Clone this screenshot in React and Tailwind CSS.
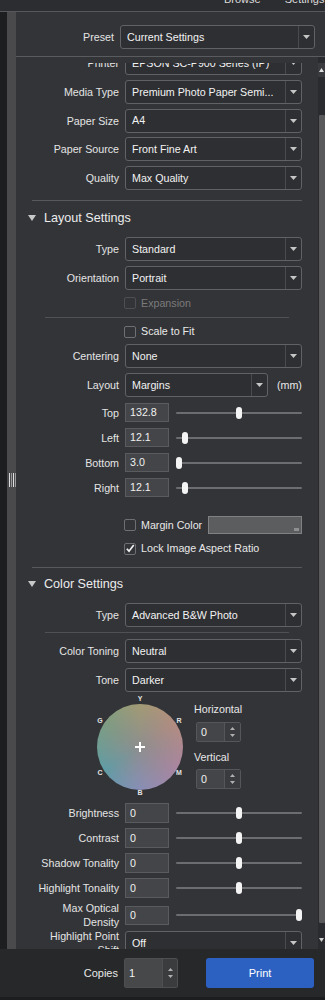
import React from 'react';

function Arrow() {
  return (
    <svg width="7" height="4" viewBox="0 0 7 4">
      <path d="M0 0H7L3.5 4Z" fill="#c6c6c6" />
    </svg>
  );
}

function UpDown() {
  return (
    <div className="flex flex-col items-center gap-[4px]">
      <svg width="5" height="3" viewBox="0 0 5 3"><path d="M0 3H5L2.5 0Z" fill="#b0b0b0" /></svg>
      <svg width="5" height="3" viewBox="0 0 5 3"><path d="M0 0H5L2.5 3Z" fill="#b0b0b0" /></svg>
    </div>
  );
}

function Select({ value, className = 'w-[177px]' }) {
  return (
    <div className={`${className} h-[24px] flex border border-[#616265] rounded-[3px] bg-[#2e2f32]`}>
      <div className="flex-1 min-w-0 pl-[6px] flex items-center text-[#f2f2f2] whitespace-nowrap overflow-hidden">
        {value}
      </div>
      <div className="w-[16px] border-l border-[#4a4b4e] flex items-center justify-center">
        <Arrow />
      </div>
    </div>
  );
}

function Label({ children }) {
  return <div className="w-[103px] shrink-0 text-right text-[#e4e4e4] leading-[14px]">{children}</div>;
}

function SelectRow({ label, value, className = '' }) {
  return (
    <div className={`flex items-center h-[24px] ${className}`}>
      <Label>{label}</Label>
      <div className="ml-[6px]">
        <Select value={value} />
      </div>
    </div>
  );
}

function Checkbox({ checked, disabled }) {
  return (
    <div
      className={`w-[12px] h-[12px] rounded-[2px] border flex items-center justify-center ${
        disabled ? 'border-[#4e4f52]' : 'border-[#6e6f72]'
      }`}
    >
      {checked && (
        <svg width="11" height="11" viewBox="0 0 11 11">
          <path d="M2 5.8L4.4 8.4L9.6 1.6" stroke="#f4f4f4" strokeWidth="1.8" fill="none" />
        </svg>
      )}
    </div>
  );
}

function CheckRow({ label, checked, disabled, className = '' }) {
  return (
    <div className={`flex items-center h-[16px] pl-[108px] ${className}`}>
      <Checkbox checked={checked} disabled={disabled} />
      <span className={`ml-[5px] ${disabled ? 'text-[#7b7b7b]' : 'text-[#e8e8e8]'}`}>{label}</span>
    </div>
  );
}

function SliderRow({ label, value, pos, className = '', h = 'h-[19px]' }) {
  return (
    <div className={`flex items-center ${className}`}>
      <Label>{label}</Label>
      <div className={`ml-[6px] w-[44px] ${h} bg-[#444548] border border-[#5a5b5e] pl-[4px] flex items-center text-[#f0f0f0]`}>
        {value}
      </div>
      <div className="ml-[7px] w-[126px] relative h-[19px] flex items-center">
        <div className="h-[2px] w-full bg-[#6c6d70] rounded-full" />
        <div
          className="absolute top-[3.5px] w-[6px] h-[12px] rounded-full bg-[#f4f4f4]"
          style={{ left: pos - 3 }}
        />
      </div>
    </div>
  );
}

function SectionHeader({ title, className = '' }) {
  return (
    <div className={`flex items-center h-[24px] ${className}`}>
      <svg className="ml-[12px]" width="8" height="6" viewBox="0 0 8 6">
        <path d="M0 0H8L4 6Z" fill="#c8c8c8" />
      </svg>
      <span className="ml-[8px] text-[12.6px] text-[#ececec]">{title}</span>
    </div>
  );
}

function Spin({ value }) {
  return (
    <div className="flex w-[45px] h-[20px] border border-[#55565a] rounded-[2px]">
      <div className="w-[27px] bg-[#444548] pl-[4px] flex items-center text-[#f0f0f0]">{value}</div>
      <div className="flex-1 bg-[#3a3b3e] border-l border-[#55565a] flex items-center justify-center">
        <UpDown />
      </div>
    </div>
  );
}

function ColorWheel() {
  const mark = 'absolute -translate-x-1/2 -translate-y-1/2 text-[7px] font-bold text-[#e4e4e4] leading-none';
  return (
    <div className="relative w-[100px] h-[104px] ml-[74px] shrink-0">
      <div className="absolute left-[7px] top-[12px] w-[86px] h-[86px] rounded-full bg-[conic-gradient(#a49c72_0deg,#b78c7e_55deg,#ac84a2_120deg,#888eba_180deg,#5a9ea8_237deg,#7c9e80_305deg,#a49c72_360deg)]">
        <div className="absolute inset-0 rounded-full bg-[radial-gradient(circle,rgba(142,142,142,1)_0%,rgba(142,142,142,0.5)_38%,rgba(142,142,142,0)_78%)]" />
        <div className="absolute left-[38px] top-[42px] w-[10px] h-[2px] bg-white" />
        <div className="absolute left-[42px] top-[38px] w-[2px] h-[10px] bg-white" />
      </div>
      <span className={`${mark} left-[50px] top-[6px]`}>Y</span>
      <span className={`${mark} left-[10px] top-[28px]`}>G</span>
      <span className={`${mark} left-[89px] top-[28px]`}>R</span>
      <span className={`${mark} left-[10px] top-[80px]`}>C</span>
      <span className={`${mark} left-[89px] top-[80px]`}>M</span>
      <span className={`${mark} left-[50px] top-[100px]`}>B</span>
    </div>
  );
}

export default function App() {
  return (
    <div className="w-[325px] h-[1000px] flex flex-col overflow-hidden bg-[#333438] font-['Liberation_Sans',Arial,sans-serif] text-[10.7px]">
      {/* top bar */}
      <div className="h-[12px] shrink-0 bg-[#2c2d30] border-b border-[#57585b] overflow-hidden">
        <div className="flex -mt-[8px] leading-[14px] text-[11px] text-[#dcdcdc]">
          <span className="ml-[224px]">Browse</span>
          <span className="ml-[24px] whitespace-nowrap">Settings</span>
        </div>
      </div>

      {/* middle */}
      <div className="flex-1 flex min-h-0">
        <div className="w-[7px] bg-[#1d1e20]" />
        <div className="w-[9px] bg-[#4a4a4c] flex flex-col">
          <div className="mt-[461px] ml-[2px] flex gap-[1px] h-[14px]">
            <div className="w-[1px] bg-[#dedede]" />
            <div className="w-[1px] bg-[#9a9a9a]" />
            <div className="w-[1px] bg-[#dedede]" />
            <div className="w-[1px] bg-[#9a9a9a]" />
          </div>
        </div>

        <div className="flex-1 flex flex-col min-w-0">
          {/* preset */}
          <div className="h-[45px] shrink-0 border-b border-[#5a5b5e] flex items-start pt-[13px]">
            <div className="w-[98px] h-[24px] flex items-center justify-end text-[#e4e4e4]">Preset</div>
            <div className="ml-[6px]">
              <Select value="Current Settings" className="w-[195px]" />
            </div>
          </div>

          {/* scroll area */}
          <div className="flex-1 flex min-h-0">
            <div className="w-[302px] pt-[6px] flex flex-col">
              <div className="flex-1 min-h-0 overflow-hidden">
                <div className="-mt-[12px] flex flex-col">
                  <SelectRow label="Printer" value="EPSON SC-P900 Series (IP)" />
                  <SelectRow label="Media Type" value="Premium Photo Paper Semi..." className="mt-[4.75px]" />
                  <SelectRow label="Paper Size" value="A4" className="mt-[4.75px]" />
                  <SelectRow label="Paper Source" value="Front Fine Art" className="mt-[4.75px]" />
                  <SelectRow label="Quality" value="Max Quality" className="mt-[4.75px]" />

                  <div className="mt-[10px] ml-[16px] w-[270px] h-[1px] bg-[#58595c]" />
                  <SectionHeader title="Layout Settings" className="mt-[5px]" />
                  <SelectRow label="Type" value="Standard" className="mt-[7px]" />
                  <SelectRow label="Orientation" value="Portrait" className="mt-[5px]" />
                  <CheckRow label="Expansion" disabled className="mt-[5px]" />
                  <div className="mt-[6px] ml-[29px] w-[244px] h-[1px] bg-[#505154]" />
                  <CheckRow label="Scale to Fit" className="mt-[5.5px]" />
                  <SelectRow label="Centering" value="None" className="mt-[4.5px]" />
                  <div className="flex items-center h-[24px] mt-[5px]">
                    <Label>Layout</Label>
                    <div className="ml-[6px]">
                      <Select value="Margins" className="w-[143px]" />
                    </div>
                    <span className="ml-[9px] text-[#e8e8e8]">(mm)</span>
                  </div>
                  <SliderRow label="Top" value="132.8" pos={63} className="mt-[6px]" />
                  <SliderRow label="Left" value="12.1" pos={9} className="mt-[6px]" />
                  <SliderRow label="Bottom" value="3.0" pos={3} className="mt-[6px]" />
                  <SliderRow label="Right" value="12.1" pos={9} className="mt-[6px]" />

                  <div className="flex items-center h-[18px] pl-[108px] pr-[16px] mt-[19px]">
                    <Checkbox />
                    <span className="ml-[5px] text-[#e8e8e8]">Margin Color</span>
                    <div className="ml-auto w-[94px] h-[18px] bg-[#5c5d5f] border border-[#808183] relative">
                      <div className="absolute right-[2px] bottom-[2px] w-[5px] h-[3px] bg-[#8e8f91]" />
                    </div>
                  </div>
                  <CheckRow label="Lock Image Aspect Ratio" checked className="mt-[6.5px]" />

                  <div className="mt-[10.5px] ml-[16px] w-[270px] h-[1px] bg-[#58595c]" />
                  <SectionHeader title="Color Settings" className="mt-[4px]" />
                  <SelectRow label="Type" value="Advanced B&W Photo" className="mt-[7px]" />
                  <div className="mt-[5px] ml-[29px] w-[244px] h-[1px] bg-[#505154]" />
                  <SelectRow label="Color Toning" value="Neutral" className="mt-[6px]" />
                  <SelectRow label="Tone" value="Darker" className="mt-[4.75px]" />

                  <div className="flex h-[104px] mt-[0.25px]">
                    <ColorWheel />
                    <div className="ml-[4px] flex flex-col text-[#e8e8e8]">
                      <div className="mt-[10px] h-[14px] leading-[14px]">Horizontal</div>
                      <div className="mt-[6px] ml-[2px]"><Spin value="0" /></div>
                      <div className="mt-[8px] h-[14px] leading-[14px]">Vertical</div>
                      <div className="mt-[5px] ml-[2px]"><Spin value="0" /></div>
                    </div>
                  </div>

                  <SliderRow label="Brightness" value="0" pos={63} h="h-[20px]" className="mt-[7px]" />
                  <SliderRow label="Contrast" value="0" pos={63} h="h-[20px]" className="mt-[5px]" />
                  <SliderRow label="Shadow Tonality" value="0" pos={63} h="h-[20px]" className="mt-[5px]" />
                  <SliderRow label="Highlight Tonality" value="0" pos={63} h="h-[20px]" className="mt-[5px]" />
                  <div className="h-[28px] mt-[3px] flex items-center">
                    <SliderRow label={<>Max Optical<br />Density</>} value="0" pos={123} />
                  </div>
                  <div className="h-[28px] flex items-center">
                    <Label>Highlight Point<br />Shift</Label>
                    <div className="ml-[6px]">
                      <Select value="Off" />
                    </div>
                  </div>
                </div>
              </div>
            </div>
            <div className="flex-1" />
            {/* scrollbar */}
            <div className="w-[7px] bg-[#2a2b2e] flex flex-col items-center pt-[6px]">
              <div className="h-[14px] w-[7px] bg-[#3a3b3e] flex items-center justify-center">
                <svg width="5" height="4" viewBox="0 0 5 4"><path d="M0 4H5L2.5 0Z" fill="#e0e0e0" /></svg>
              </div>
              <div className="mt-[38px] w-[6px] h-[808px] bg-[#59595b] rounded-[1px]" />
              <div className="mt-[10px] h-[14px] w-[7px] flex items-center justify-center">
                <svg width="5" height="4" viewBox="0 0 5 4"><path d="M0 0H5L2.5 4Z" fill="#d0d0d0" /></svg>
              </div>
            </div>
          </div>
        </div>
      </div>

      {/* footer */}
      <div className="h-[48px] shrink-0 bg-[#27282a] flex items-center">
        <div className="w-[118px] text-right text-[#e8e8e8] text-[11px]">Copies</div>
        <div className="ml-[6px] flex w-[54px] h-[30px] border border-[#4e4f52] rounded-[2px]">
          <div className="w-[37px] bg-[#47484a] pl-[4px] flex items-center text-[#f0f0f0] text-[11px]">1</div>
          <div className="flex-1 bg-[#3b3c3e] border-l border-[#4e4f52] flex items-center justify-center">
            <UpDown />
          </div>
        </div>
        <div className="ml-[28px] w-[108px] h-[30px] rounded-[3px] bg-[#2c61c2] flex items-center justify-center text-white text-[11px]">
          Print
        </div>
      </div>
      <div className="h-[3px] shrink-0 bg-[#1c1d1f]" />
    </div>
  );
}
